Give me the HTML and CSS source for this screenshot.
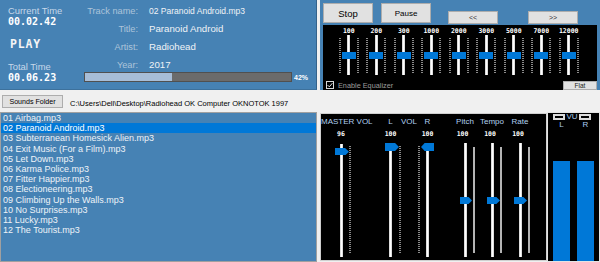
FILE: index.html
```html
<!DOCTYPE html>
<html lang="en">

<head>
    <meta charset="UTF-8">
    <meta name="viewport" content="width=device-width, initial-scale=1.0">
    <title>Sound Player</title>
    <link rel="stylesheet" href="styles.css">
</head>

<body>
    <div class="top">
        <div class="info">
            <div class="times">
                <div class="time-label">Current Time</div>
                <div class="time">00.02.42</div>
                <div class="state">PLAY</div>
                <div class="time-label total">Total Time</div>
                <div class="time">00.06.23</div>
            </div>
            <div class="meta">
                <div class="tags">
                    <span class="tag-name">Track name:</span>
                    <span class="tag-value small">02 Paranoid Android.mp3</span>
                    <span class="tag-name">Title:</span>
                    <span class="tag-value">Paranoid Android</span>
                    <span class="tag-name">Artist:</span>
                    <span class="tag-value">Radiohead</span>
                    <span class="tag-name">Year:</span>
                    <span class="tag-value">2017</span>
                </div>
                <div class="progress-row">
                    <div class="progress">
                        <div class="progress-fill" style="width: 42%"></div>
                    </div>
                    <span class="percent">42%</span>
                </div>
            </div>
        </div>

        <div class="controls">
            <div class="buttons">
                <button class="btn btn-big stop">Stop</button>
                <button class="btn btn-big pause">Pause</button>
                <button class="btn btn-small prev">&lt;&lt;</button>
                <button class="btn btn-small next">&gt;&gt;</button>
            </div>
            <div class="eq">
                <div class="bands">
                    <div class="band"><span class="band-label">100</span><div class="eq-slider"><span class="eq-thumb"></span></div></div>
                    <div class="band"><span class="band-label">200</span><div class="eq-slider"><span class="eq-thumb"></span></div></div>
                    <div class="band"><span class="band-label">300</span><div class="eq-slider"><span class="eq-thumb"></span></div></div>
                    <div class="band"><span class="band-label">1000</span><div class="eq-slider"><span class="eq-thumb"></span></div></div>
                    <div class="band"><span class="band-label">2000</span><div class="eq-slider"><span class="eq-thumb"></span></div></div>
                    <div class="band"><span class="band-label">3000</span><div class="eq-slider"><span class="eq-thumb"></span></div></div>
                    <div class="band"><span class="band-label">5000</span><div class="eq-slider"><span class="eq-thumb"></span></div></div>
                    <div class="band"><span class="band-label">7000</span><div class="eq-slider"><span class="eq-thumb"></span></div></div>
                    <div class="band"><span class="band-label">12000</span><div class="eq-slider"><span class="eq-thumb"></span></div></div>
                </div>
                <div class="eq-footer">
                    <span class="check">
                        <svg width="6" height="6" viewBox="0 0 6 6">
                            <path d="M0.6 3.1 L2.3 4.8 L5.4 1.2" fill="none" stroke="#fff" stroke-width="0.9"/>
                        </svg>
                    </span>
                    <span class="check-label">Enable Equalizer</span>
                    <button class="btn flat">Flat</button>
                </div>
            </div>
        </div>
    </div>

    <div class="folder">
        <button class="btn folder-btn">Sounds Folder</button>
        <span class="path">C:\Users\Dell\Desktop\Radiohead OK Computer OKNOTOK 1997</span>
    </div>

    <div class="bottom">
        <div class="playlist">
            <div class="track">01 Airbag.mp3</div>
            <div class="track active">02 Paranoid Android.mp3</div>
            <div class="track">03 Subterranean Homesick Alien.mp3</div>
            <div class="track">04 Exit Music (For a Film).mp3</div>
            <div class="track">05 Let Down.mp3</div>
            <div class="track">06 Karma Police.mp3</div>
            <div class="track">07 Fitter Happier.mp3</div>
            <div class="track">08 Electioneering.mp3</div>
            <div class="track">09 Climbing Up the Walls.mp3</div>
            <div class="track">10 No Surprises.mp3</div>
            <div class="track">11 Lucky.mp3</div>
            <div class="track">12 The Tourist.mp3</div>
        </div>

        <div class="mixer">
            <div class="ch ch-master">
                <span class="ch-label">MASTER VOL</span>
                <span class="ch-value">96</span>
                <div class="ch-slider master-slider"><span class="thumb thumb-right master-thumb" style="top: 5px"></span></div>
            </div>
            <div class="ch ch-l">
                <span class="ch-label">L</span>
                <span class="ch-value">100</span>
                <div class="ch-slider ticks-right"><span class="thumb thumb-right l-thumb" style="top: 0px"></span></div>
            </div>
            <div class="ch ch-vol">
                <span class="ch-label">VOL</span>
            </div>
            <div class="ch ch-r">
                <span class="ch-label">R</span>
                <span class="ch-value">100</span>
                <div class="ch-slider ticks-left"><span class="thumb thumb-left r-thumb" style="top: 0px"></span></div>
            </div>
            <div class="ch ch-pitch">
                <span class="ch-label">Pitch</span>
                <span class="ch-value shifted">100</span>
                <div class="ch-slider line-right"><span class="thumb thumb-right pitch-thumb" style="top: 54px"></span></div>
            </div>
            <div class="ch ch-tempo">
                <span class="ch-label">Tempo</span>
                <span class="ch-value shifted">100</span>
                <div class="ch-slider line-right"><span class="thumb thumb-right tempo-thumb" style="top: 54px"></span></div>
            </div>
            <div class="ch ch-rate">
                <span class="ch-label">Rate</span>
                <span class="ch-value shifted">100</span>
                <div class="ch-slider line-right"><span class="thumb thumb-right rate-thumb" style="top: 54px"></span></div>
            </div>
        </div>

        <div class="vu">
            <div class="vu-head">
                <span class="vu-box"></span>
                <span class="vu-title">VU</span>
                <span class="vu-box"></span>
            </div>
            <div class="vu-lr"><span>L</span><span>R</span></div>
            <div class="vu-bars">
                <div class="vu-bar" style="height: 100px"></div>
                <div class="vu-bar" style="height: 100px"></div>
            </div>
        </div>
    </div>
</body>

</html>
```

FILE: styles.css
```css
body {
    margin: 0;
    width: 600px;
    height: 262px;
    overflow: hidden;
    background-color: #f0f0f0;
    font-family: "Liberation Sans", Arial, sans-serif;
}

/* top row */

.top {
    display: flex;
    height: 90px;
}

.info {
    display: flex;
    width: 317px;
    height: 90px;
    box-sizing: border-box;
    background-color: #4682b4;
    border-right: 1px solid #34628a;
    border-bottom: 1px solid #3d719c;
}

.times {
    width: 75px;
    flex: none;
    padding: 5px 0 0 8px;
    box-sizing: border-box;
}

.time-label {
    font-size: 9.4px;
    line-height: 11px;
    color: #c6d8ea;
    white-space: nowrap;
}

.time-label.total {
    margin-top: 9.6px;
}

.time {
    font-family: "DejaVu Sans Mono", monospace;
    font-weight: bold;
    font-size: 10px;
    line-height: 11px;
    color: #fff;
}

.state {
    margin-top: 10.4px;
    padding-left: 2px;
    font-family: "DejaVu Sans Mono", monospace;
    font-weight: bold;
    font-size: 11.5px;
    line-height: 14px;
    letter-spacing: 0.8px;
    color: #f5f5f5;
}

.meta {
    flex: 1;
    display: flex;
    flex-direction: column;
}

.tags {
    display: grid;
    grid-template-columns: 63px 1fr;
    column-gap: 11px;
    padding-top: 1.5px;
    line-height: 18px;
}

.tag-name {
    text-align: right;
    font-size: 9.2px;
    color: #adc4da;
    white-space: nowrap;
}

.tag-value {
    font-size: 9.7px;
    color: #f0f3f6;
    white-space: nowrap;
}

.tag-value.small {
    font-size: 8.5px;
}

.progress-row {
    display: flex;
    align-items: center;
    height: 10px;
    margin-top: -1.5px;
    padding-left: 9px;
}

.progress {
    width: 208px;
    height: 10px;
    box-sizing: border-box;
    border: 1px solid #505050;
    background-color: #6b6b6b;
}

.progress-fill {
    height: 100%;
    background-color: #a7bdd7;
}

.percent {
    margin-left: 2px;
    font-size: 7px;
    font-weight: bold;
    color: #fff;
}

/* buttons and equalizer */

.controls {
    display: flex;
    flex-direction: column;
    width: 280px;
    margin-left: 3px;
    padding: 3px 3px 0;
    box-sizing: border-box;
    background-color: #4682b4;
}

.buttons {
    display: flex;
    align-items: flex-start;
    height: 22px;
}

.btn {
    padding: 0;
    box-sizing: border-box;
    background-color: #e1e1e1;
    border: 1px solid #adadad;
    font-family: inherit;
    color: #000;
}

.btn-big {
    width: 50px;
    height: 20px;
}

.stop {
    font-size: 9.5px;
}

.pause {
    margin-left: 8px;
    font-size: 8px;
}

.btn-small {
    width: 50px;
    height: 13px;
    margin-top: 8px;
    font-size: 7px;
    line-height: 8px;
    color: #333;
}

.prev {
    margin-left: 17px;
}

.next {
    margin-left: 30px;
}

.eq {
    display: flex;
    flex-direction: column;
    width: 274px;
    height: 65px;
    padding-top: 2px;
    box-sizing: border-box;
    background-color: #000;
}

.bands {
    display: flex;
    height: 50px;
    padding-left: 12px;
}

.band {
    display: flex;
    flex-direction: column;
    align-items: center;
    flex: none;
    width: 27.5px;
}

.band-label {
    height: 8px;
    font-family: "DejaVu Sans Mono", monospace;
    font-weight: bold;
    font-size: 6.5px;
    line-height: 8px;
    color: #fff;
    white-space: nowrap;
}

.eq-slider {
    position: relative;
    width: 20px;
    height: 42px;
    background:
        linear-gradient(to right, #bdbdbd, #fff 35%, #fff 65%, #bdbdbd) 50% 0 / 3px 40px no-repeat,
        repeating-linear-gradient(#8a8a8a 0 1px, transparent 1px 2px) 0 3px / 2px 35px no-repeat,
        repeating-linear-gradient(#8a8a8a 0 1px, transparent 1px 2px) 100% 3px / 2px 35px no-repeat;
}

.eq-thumb {
    position: absolute;
    left: 3px;
    top: 17px;
    width: 14px;
    height: 7px;
    background-color: #0078d7;
}

.eq-footer {
    display: flex;
    align-items: center;
    height: 10px;
    margin-top: 3px;
    padding-left: 3px;
}

.check {
    display: flex;
    align-items: center;
    justify-content: center;
    width: 8px;
    height: 8px;
    box-sizing: border-box;
    border: 1px solid #d8d8d8;
}

.check-label {
    margin-left: 4px;
    font-size: 7.3px;
    color: #9c9c9c;
    white-space: nowrap;
}

.flat {
    margin-left: auto;
    width: 34px;
    height: 9px;
    font-size: 6.5px;
    line-height: 7px;
    color: #222;
}

/* folder row */

.folder {
    display: flex;
    align-items: flex-start;
    height: 22px;
    padding: 5px 0 0 2px;
    box-sizing: border-box;
}

.folder-btn {
    width: 61px;
    height: 13px;
    font-size: 7.1px;
}

.path {
    margin-left: 7px;
    margin-top: 2.3px;
    font-size: 7.5px;
    line-height: 13px;
    color: #000;
    white-space: nowrap;
}

/* bottom row */

.bottom {
    display: flex;
    height: 150px;
}

.playlist {
    width: 317px;
    flex: none;
    box-sizing: border-box;
    border: 1px solid #a0a0a0;
    background-color: #4682b4;
    overflow: hidden;
}

.track {
    padding-left: 2px;
    font-size: 9px;
    line-height: 10.2px;
    color: #eef3f8;
    white-space: nowrap;
}

.track.active {
    background-color: #0078d7;
    color: #fff;
}

.mixer {
    display: flex;
    align-items: flex-start;
    width: 227px;
    height: 148px;
    flex: none;
    margin: 1px 0 0 3px;
    padding-top: 2.3px;
    box-sizing: border-box;
    border: 1px solid #cfcfcf;
    background-color: #000;
}

.ch {
    display: flex;
    flex-direction: column;
    align-items: center;
    flex: none;
    width: 20px;
}

.ch-master {
    width: 40px;
}

.ch-master .ch-label {
    align-self: flex-start;
}

.ch-l {
    margin-left: 19.5px;
}

.ch-vol {
    width: 17px;
}

.ch-pitch {
    margin-left: 17.5px;
}

.ch-tempo {
    margin-left: 7px;
}

.ch-rate {
    margin-left: 8px;
}

.ch-label {
    height: 12px;
    font-size: 8px;
    line-height: 12px;
    color: #b0d0f0;
    white-space: nowrap;
}

.ch-value {
    height: 8px;
    margin-top: 2px;
    font-family: "DejaVu Sans Mono", monospace;
    font-weight: bold;
    font-size: 6.5px;
    line-height: 8px;
    color: #fff;
}

.ch-value.shifted {
    padding-right: 5px;
}

.ch-tempo .ch-value.shifted,
.ch-rate .ch-value.shifted {
    padding-right: 4px;
}

.ch-slider {
    position: relative;
    width: 20px;
    height: 114px;
    margin-top: 4.7px;
    background: linear-gradient(to right, #bdbdbd, #fff 35%, #fff 65%, #bdbdbd) 50% 0 / 3px 114px no-repeat;
}

.master-slider {
    background:
        linear-gradient(to right, #bdbdbd, #fff 35%, #fff 65%, #bdbdbd) 50% 1px / 3px 113px no-repeat,
        repeating-linear-gradient(#8a8a8a 0 1px, transparent 1px 2px) 100% 3px / 2px 108px no-repeat;
}

.ticks-right {
    background:
        linear-gradient(to right, #bdbdbd, #fff 35%, #fff 65%, #bdbdbd) 50% 0 / 3px 114px no-repeat,
        repeating-linear-gradient(#8a8a8a 0 1px, transparent 1px 2px) 100% 3px / 2px 108px no-repeat;
}

.ticks-left {
    background:
        linear-gradient(to right, #bdbdbd, #fff 35%, #fff 65%, #bdbdbd) 50% 0 / 3px 114px no-repeat,
        repeating-linear-gradient(#8a8a8a 0 1px, transparent 1px 2px) 0 3px / 2px 108px no-repeat;
}

.line-right {
    background:
        linear-gradient(to right, #bdbdbd, #fff 35%, #fff 65%, #bdbdbd) 50% 0 / 3px 114px no-repeat,
        linear-gradient(#b4b4b4, #b4b4b4) 100% 4px / 2px 106px no-repeat;
}

.thumb {
    position: absolute;
    height: 8px;
    background-color: #0078d7;
}

.thumb-right {
    clip-path: polygon(0 0, 72% 0, 100% 50%, 72% 100%, 0 100%);
}

.thumb-left {
    clip-path: polygon(28% 0, 100% 0, 100% 100%, 28% 100%, 0 50%);
}

.master-thumb {
    left: 4px;
    width: 14px;
    height: 7.5px;
}

.l-thumb {
    left: 4.5px;
    width: 14px;
}

.r-thumb {
    left: 3.5px;
    width: 13px;
}

.pitch-thumb {
    left: 5px;
    width: 12px;
    height: 7px;
}

.tempo-thumb {
    left: 5px;
    width: 13px;
    height: 7px;
}

.rate-thumb {
    left: 4px;
    width: 13px;
    height: 7px;
}

.vu {
    display: flex;
    flex-direction: column;
    width: 53px;
    height: 150px;
    flex: none;
    padding-left: 5px;
    box-sizing: border-box;
    border: 1px solid #e4e4e4;
    background-color: #000;
}

.vu-head {
    display: flex;
    align-items: center;
    height: 6px;
    margin-top: 1px;
}

.vu-box {
    width: 12px;
    height: 6px;
    box-sizing: border-box;
    border: 2px solid #dcdcdc;
}

.vu-title {
    margin: 0 1.5px;
    font-size: 8px;
    line-height: 6px;
    color: #a8ccf0;
}

.vu-lr {
    display: flex;
    gap: 7px;
    font-size: 8px;
    line-height: 10px;
    color: #a8ccf0;
}

.vu-lr span {
    width: 17px;
    text-align: center;
}

.vu-bars {
    display: flex;
    align-items: flex-end;
    gap: 7px;
    margin-top: auto;
}

.vu-bar {
    width: 17px;
    background-color: #0078d7;
}
```
